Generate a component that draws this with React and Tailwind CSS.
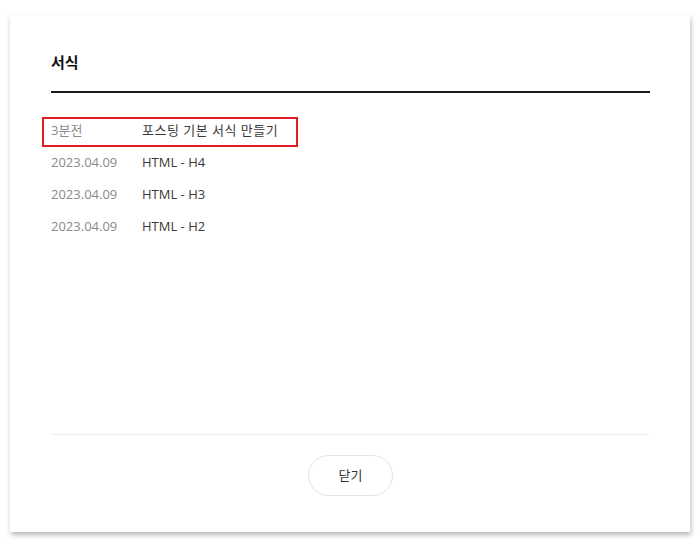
import React from 'react';

const rows = [
  { date: '3분전', title: '포스팅 기본 서식 만들기', current: true },
  { date: '2023.04.09', title: 'HTML - H4' },
  { date: '2023.04.09', title: 'HTML - H3' },
  { date: '2023.04.09', title: 'HTML - H2' },
];

const App = () => {
  return (
    <div className="min-h-screen bg-white pt-[15px] pl-[10px] font-['Open_Sans','Noto_Sans_CJK_KR',sans-serif]">
      <div className="flex h-[517px] w-[680px] flex-col bg-white pl-[41px] pr-[40px] shadow-[1px_3px_5px_rgba(0,0,0,0.28)]">
        {/* Header */}
        <h2 className="border-b-2 border-[#1a1a1a] pt-[36px] pb-[18px] text-[15px] font-bold leading-[22px] text-[#111]">
          서식
        </h2>

        {/* Revision list */}
        <ul className="mt-[22px] flex-1">
          {rows.map((row, i) => (
            <li key={i} className="relative flex h-8 items-center text-[13px]">
              <span className="w-[91px] text-[#8a8a8a]">{row.date}</span>
              <span className={row.current ? 'tracking-[0.5px] text-[#3a3a3a]' : 'text-[#3a3a3a]'}>{row.title}</span>
              {row.current && (
                <span className="pointer-events-none absolute left-[-9px] top-[2px] h-[30px] w-[256px] border-2 border-[#e01b22]" />
              )}
            </li>
          ))}
        </ul>

        {/* Footer */}
        <div className="flex justify-center border-t border-[#eeeeee] pt-5 pb-[36px]">
          <button className="h-[41px] w-[85px] rounded-full border border-[#e2e2e2] bg-white text-[13px] text-[#333]">
            닫기
          </button>
        </div>
      </div>
    </div>
  );
};

export default App;
